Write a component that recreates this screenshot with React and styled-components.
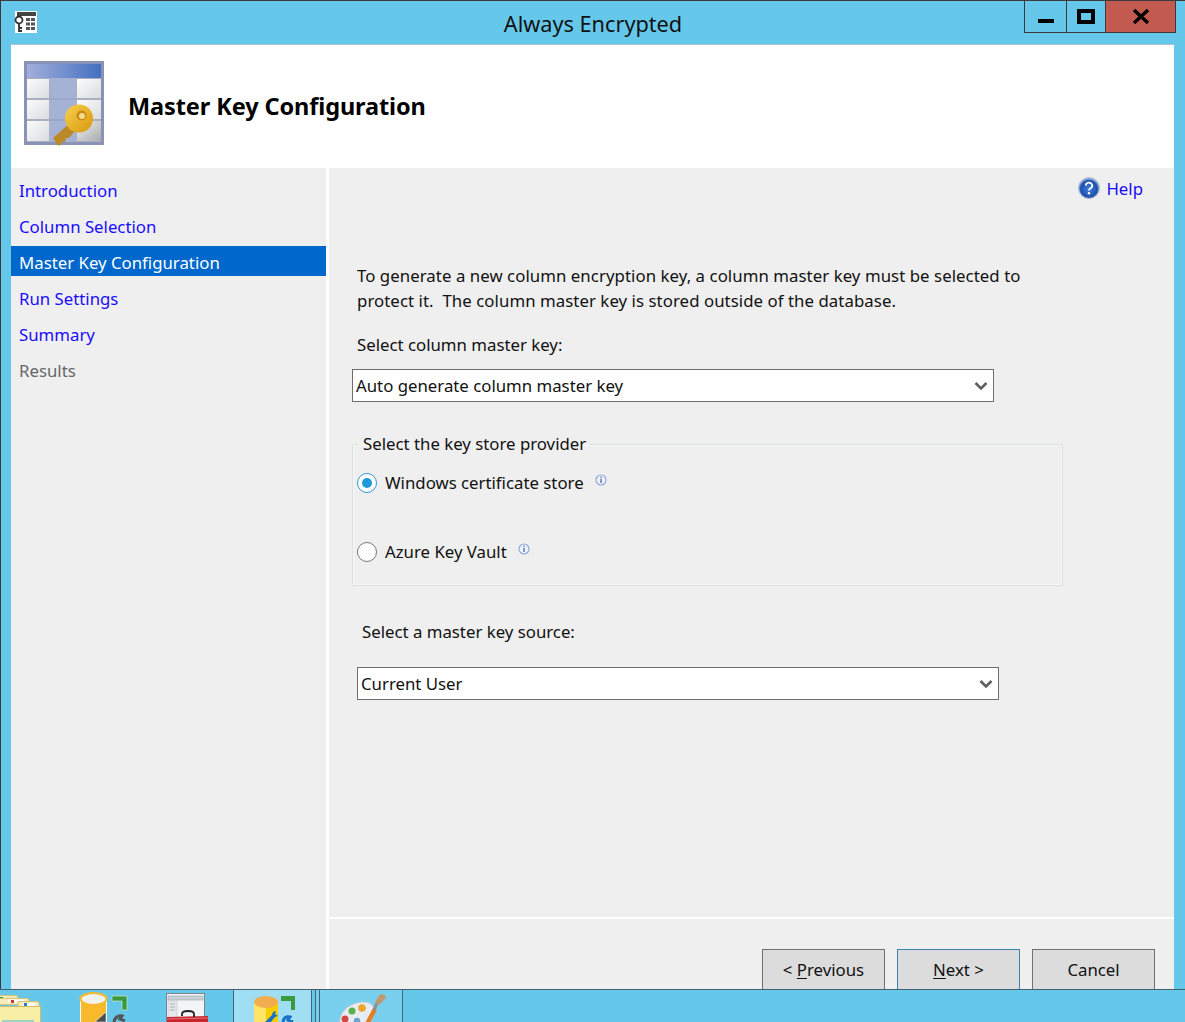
import React from 'react';
import styled, { createGlobalStyle } from 'styled-components';

const Global = createGlobalStyle`
  html, body { margin: 0; padding: 0; background: #65c8ea; }
  body { font-family: "Noto Sans", "Open Sans", "Liberation Sans", sans-serif; font-size: 16.8px; color: #111; }
  * { box-sizing: border-box; }
`;

const Screen = styled.div`
  width: 1185px; height: 1022px; display: flex; flex-direction: column; overflow: hidden; background: #65c8ea;
`;
const Win = styled.div`
  height: 989px; flex: none; display: flex; flex-direction: column; overflow: hidden;
  border-top: 1px solid #3a3a3a; border-left: 1px solid #3a3a3a; padding: 0 11px 0 10px;
`;
const TitleBar = styled.div`
  height: 43px; flex: none; display: flex; align-items: flex-start; position: relative; margin: 0 -11px 0 -10px; padding-left: 13px;
`;
const AppIcon = styled.svg`
  width: 24px; height: 24px; margin-top: 9px; flex: none;
`;
const Title = styled.div`
  position: absolute; left: 0; right: 0; top: 8px; text-align: center; font-size: 21.7px; line-height: 30px; color: #111;
`;
const Controls = styled.div`
  position: absolute; left: 1023px; top: 0; width: 152px; height: 32px; display: flex;
  border: 1px solid #3a3a3a; border-top: none;
`;
const Ctl = styled.div`
  width: ${p => p.$w}px; height: 31px; display: flex; align-items: flex-start; justify-content: center;
  background: ${p => p.$close ? '#c35a50' : 'transparent'};
  border-right: ${p => p.$close ? 'none' : '1px solid #3a3a3a'};
`;
const Header = styled.div`
  height: 124px; flex: none; background: #fff; display: flex; align-items: center; padding: 0 0 0 13px; gap: 22px;
  border-top: 1px solid #a8c4d0;
`;
const Heading = styled.h1`
  margin: 0 0 2px 0; font-size: 23.5px; font-weight: 700; color: #000; letter-spacing: -0.1px;
`;
const Body = styled.div`
  flex: 1; display: flex; min-height: 0; background: #fff;
`;
const Side = styled.nav`
  width: 315px; flex: none; background: #efefef; padding-top: 6px; display: flex; flex-direction: column;
`;
const Step = styled.div`
  height: 36px; line-height: 33px; padding-left: 8px; font-size: 16.8px;
  color: ${p => p.$active ? '#fff' : p.$disabled ? '#666' : '#1a0dff'};
  background: ${p => p.$active ? '#0067cc' : 'transparent'};
  ${p => p.$active ? 'height: 30px; margin-bottom: 6px;' : ''}
`;
const Main = styled.main`
  margin-left: 3px; flex: 1; min-width: 0; display: flex; flex-direction: column; background: #efefef;
`;
const Content = styled.div`
  height: 751px; flex: none; padding: 0 0 0 23px; border-bottom: 2px solid #fff;
`;
const HelpRow = styled.div`
  display: flex; justify-content: flex-end; align-items: center; gap: 6px; height: 22px; margin-top: 9px; padding-right: 31px;
  font-size: 16.8px; color: #1a0dff;
`;
const Intro = styled.p`
  margin: 64px 0 0 5px; font-size: 16.8px; letter-spacing: 0.06px; line-height: 25px; width: 700px; color: #111; white-space: pre-wrap;
`;
const FieldLabel = styled.div`
  margin: ${p => p.$top}px 0 0 ${p => p.$left}px; font-size: 16.8px; line-height: 24px; color: #111;
`;
const Select = styled.div`
  width: 642px; height: 33px; margin: ${p => p.$top}px 0 0 ${p => p.$left}px; background: #fff; border: 1px solid #6e6e6e;
  display: flex; align-items: center; justify-content: space-between; padding: 0 5px 0 3px;
  font-size: 16.8px; color: #111;
`;
const Group = styled.fieldset`
  width: 711px; height: 154px; margin: 30px 0 0 0; padding: 0 0 0 4px; border: 1px solid #dbe0e3; border-radius: 2px;
  box-shadow: inset 0 0 0 1px #f7f7f7; min-width: 0; display: flex; flex-direction: column;
`;
const Legend = styled.legend`
  margin-left: 2px; padding: 0 4px; font-size: 16.8px; line-height: 24px; color: #111;
`;
const RadioRow = styled.div`
  display: flex; align-items: center; height: 24px; margin-top: ${p => p.$top}px; font-size: 16.8px; color: #111;
`;
const RadioText = styled.span`
  line-height: 22px;
`;
const Radio = styled.span`
  width: 20px; height: 20px; border-radius: 50%; flex: none; margin-right: 8px; background: #fff;
  border: 1.5px solid ${p => p.$on ? '#2a9ad6' : '#777'}; display: flex; align-items: center; justify-content: center;
  &::after { content: ''; width: 10px; height: 10px; border-radius: 50%; background: ${p => p.$on ? '#1f9ad8' : 'transparent'}; }
`;
const Info = styled.svg`
  width: 12px; height: 12px; margin: -7px 0 0 11px; flex: none;
`;
const Footer = styled.div`
  flex: 1; min-height: 0; overflow: hidden; display: flex; justify-content: flex-end; gap: 12px; padding: 30px 19px 0 0;
`;
const Btn = styled.div`
  width: 123px; height: 60px; background: #dcdcdc; border: 1px solid ${p => p.$focus ? '#3c7fb1' : '#707070'};
  text-align: center; font-size: 16.8px; line-height: 40px; color: #111;
  & u { text-underline-offset: 2px; }
`;
const Taskbar = styled.div`
  height: 33px; flex: none; border-top: 1px solid #44606c; background: #65c8ea; display: flex; align-items: stretch; overflow: hidden;
`;
const TaskSlot = styled.div`
  width: ${p => p.$w}px; margin-left: ${p => p.$ml || 0}px; flex: none; overflow: hidden; height: 32px;
  ${p => p.$open ? 'background: #a0dff3; border-left: 1px solid #3f6576; border-right: 1px solid #3f6576;' : ''}
  ${p => p.$run ? 'background: #78d0ee; border-left: 1px solid #3f6576; border-right: 1px solid #3f6576;' : ''}
`;
const TaskIcon = styled.svg`
  display: block; width: ${p => p.$w}px; height: 32px;
`;

const Chevron = () => (
  <svg width="14" height="10" viewBox="0 0 14 10" style={{ flex: 'none' }}>
    <path d="M1.5 2 L7 7.5 L12.5 2" fill="none" stroke="#5f5f5f" strokeWidth="2.6" />
  </svg>
);

const InfoIcon = () => (
  <Info viewBox="0 0 12 12">
    <circle cx="6" cy="6" r="5" fill="#eef3fb" stroke="#8fa9d6" strokeWidth="1.2" />
    <rect x="5.4" y="2.6" width="1.3" height="1.3" fill="#4068b5" />
    <rect x="5.4" y="4.8" width="1.3" height="4.2" fill="#4068b5" />
  </Info>
);

const HeaderIcon = () => (
  <svg width="82" height="88" viewBox="0 0 82 88" style={{ flex: 'none', marginTop: '-5px' }}>
    <defs>
      <filter id="soft" x="-5%" y="-5%" width="110%" height="110%"><feGaussianBlur stdDeviation="0.7" /></filter>
      <linearGradient id="hb" x1="0" x2="1" y1="0" y2="0"><stop offset="0" stopColor="#a3aedc" /><stop offset="1" stopColor="#4470c0" /></linearGradient>
      <linearGradient id="cell" x1="0" x2="1" y1="0" y2="1"><stop offset="0" stopColor="#fbfbfb" /><stop offset="1" stopColor="#dadcdf" /></linearGradient>
      <linearGradient id="cellr" x1="0" x2="1" y1="0" y2="1"><stop offset="0" stopColor="#f0f0f0" /><stop offset="1" stopColor="#a9abad" /></linearGradient>
      <linearGradient id="keyg" x1="0" x2="1" y1="0" y2="1"><stop offset="0" stopColor="#f9d04c" /><stop offset="1" stopColor="#d8980f" /></linearGradient>
    </defs>
    <g filter="url(#soft)">
      <rect x="0" y="1" width="80" height="84" fill="#8a93b5" />
      <rect x="3" y="4" width="74" height="14" fill="url(#hb)" />
      <rect x="3" y="18" width="74" height="64" fill="#a9afc0" />
      <rect x="26" y="18" width="26" height="64" fill="#a6b1d6" />
      <path d="M26 39h26M26 60h26" stroke="#99a3c4" strokeWidth="1.5" />
      <rect x="3" y="19" width="22" height="19" fill="url(#cell)" />
      <rect x="3" y="40" width="22" height="19" fill="url(#cell)" />
      <rect x="3" y="61" width="22" height="20" fill="url(#cell)" />
      <rect x="53" y="19" width="24" height="19" fill="url(#cell)" />
      <rect x="53" y="40" width="24" height="19" fill="url(#cell)" />
      <rect x="53" y="61" width="24" height="20" fill="url(#cellr)" />
      <path d="M46 63 L29 78 L32 83 L35 86 L38 82 L41 82 L42 78 L45 78 L53 69 Z" fill="#bb8a25" />
      <circle cx="55" cy="58.500" r="14" fill="url(#keyg)" />
      <circle cx="57.500" cy="55.500" r="5" fill="#c98a12" />
      <circle cx="58" cy="56" r="3" fill="#f0dc90" />
    </g>
  </svg>
);

export default function App() {
  return (
    <Screen>
      <Global />
      <Win>
        <TitleBar>
          <AppIcon viewBox="0 0 24 24">
            <rect x="1" y="1" width="22" height="22" fill="#fff" />
            <rect x="3" y="2" width="19" height="4" fill="#444" />
            <path d="M12 8h4v3h-4zM17 8h4v3h-4zM12 12.5h4v3h-4zM17 12.5h4v3h-4zM12 17h4v3h-4zM17 17h4v3h-4z" fill="#555" />
            <circle cx="5" cy="10" r="3.5" fill="#fff" stroke="#333" strokeWidth="1.8" />
            <path d="M5 13.5V22M5 18h3M5 21h3" stroke="#333" strokeWidth="1.8" fill="none" />
          </AppIcon>
          <Title>Always Encrypted</Title>
          <Controls>
            <Ctl $w={42}>
              <svg width="16" height="24" viewBox="0 0 16 24"><rect x="0" y="18" width="16" height="4" fill="#000" /></svg>
            </Ctl>
            <Ctl $w={39}>
              <svg width="18" height="24" viewBox="0 0 18 24"><rect x="2" y="10" width="14" height="11" fill="none" stroke="#000" strokeWidth="4" /></svg>
            </Ctl>
            <Ctl $close $w={69}>
              <svg width="18" height="24" viewBox="0 0 18 24"><path d="M2 9 L16 22 M16 9 L2 22" stroke="#000" strokeWidth="3.4" fill="none" /></svg>
            </Ctl>
          </Controls>
        </TitleBar>
        <Header>
          <HeaderIcon />
          <Heading>Master Key Configuration</Heading>
        </Header>
        <Body>
          <Side>
            <Step>Introduction</Step>
            <Step>Column Selection</Step>
            <Step $active>Master Key Configuration</Step>
            <Step>Run Settings</Step>
            <Step>Summary</Step>
            <Step $disabled>Results</Step>
          </Side>
          <Main>
            <Content>
              <HelpRow>
                <svg width="22" height="22" viewBox="0 0 22 22">
                  <defs><radialGradient id="hg" cx="0.5" cy="0.55" r="0.55"><stop offset="0" stopColor="#3f7fe0" /><stop offset="0.72" stopColor="#1f4fa8" /><stop offset="1" stopColor="#d3dff2" /></radialGradient></defs>
                  <circle cx="11" cy="11" r="10.5" fill="url(#hg)" stroke="#a8bad8" />
                  <path d="M7.8 8.5a3.2 3 0 1 1 4.6 2.8c-1 .6-1.4 1.1-1.4 2.2" fill="none" stroke="#fff" strokeWidth="1.8" />
                  <circle cx="11" cy="16.2" r="1.2" fill="#fff" />
                </svg>
                Help
              </HelpRow>
              <Intro>{'To generate a new column encryption key, a column master key must be selected to\nprotect it.  The column master key is stored outside of the database.'}</Intro>
              <FieldLabel $top={20} $left={5}>Select column master key:</FieldLabel>
              <Select $top={12} $left={0}>Auto generate column master key<Chevron /></Select>
              <Group>
                <Legend>Select the key store provider</Legend>
                <RadioRow $top={15}><Radio $on /><RadioText>Windows certificate store</RadioText><InfoIcon /></RadioRow>
                <RadioRow $top={45}><Radio /><RadioText>Azure Key Vault</RadioText><InfoIcon /></RadioRow>
              </Group>
              <FieldLabel $top={34} $left={10}>Select a master key source:</FieldLabel>
              <Select $top={23} $left={5}>Current User<Chevron /></Select>
            </Content>
            <Footer>
              <Btn>&lt; <u>P</u>revious</Btn>
              <Btn $focus><u>N</u>ext &gt;</Btn>
              <Btn>Cancel</Btn>
            </Footer>
          </Main>
        </Body>
      </Win>
      <Taskbar>
        <TaskSlot $w={79}>
          <TaskIcon $w={79} viewBox="0 0 79 32">
            <path d="M-2 5.5h18a2 2 0 0 1 2 2v3h-20z" fill="#f7ecb8" stroke="#d8c27a" />
            <rect x="0" y="7" width="3" height="3" fill="#2f9e44" />
            <path d="M-2 8.5h29a2 2 0 0 1 2 2v4h-31z" fill="#f7ecb8" stroke="#d8c27a" />
            <path d="M8 9.5h16v3h-16z" fill="#fff" />
            <rect x="11" y="10" width="3" height="3" fill="#c23a2b" />
            <path d="M18 11.5h19a2 2 0 0 1 2 2v3h-21z" fill="#f7ecb8" stroke="#d8c27a" />
            <path d="M23 13h12v3h-12z" fill="#fff" />
            <rect x="24" y="13" width="3" height="3" fill="#2c7ac8" />
            <path d="M-2 16.5h42.500v16h-42.500z" fill="#f8eea6" stroke="#d4bb6b" />
            <path d="M2 30h32v2h-32z" fill="#9ed4c8" />
          </TaskIcon>
        </TaskSlot>
        <TaskSlot $w={154}>
          <TaskIcon $w={154} viewBox="0 0 154 32">
            <path d="M1.500 9v24h26V9z" fill="#f8b92b" stroke="#f2f6f4" />
            <ellipse cx="14.500" cy="9" rx="13" ry="6" fill="#f1f1ee" stroke="#f8b92b" strokeWidth="2" />
            <path d="M16 32L27 22v10z" fill="#4c4c4c" stroke="#e6eef0" strokeWidth=".6" />
            <path d="M33 6h15v14h-5v-9h-10z" fill="#3a9a3e" stroke="#cfe8d0" strokeWidth=".7" />
            <path d="M35 33c0-5 4-8 8-7l-2 3 5 2" fill="none" stroke="#555" strokeWidth="3" />
            <rect x="87.500" y="3.500" width="38" height="30" fill="#f2f4f6" stroke="#7e8288" />
            <rect x="89" y="6" width="35" height="4" fill="#c9d0d8" stroke="#8e949b" strokeWidth=".5" />
            <path d="M89 11h9v20h-9z" fill="#e4e8ec" stroke="#b6bcc4" strokeWidth=".5" />
            <path d="M91 14h5M91 17h5M91 20h5" stroke="#9aa2aa" strokeWidth=".8" />
            <path d="M88 27l41-1v7H88z" fill="#c9252d" />
            <path d="M88 29l41-1" stroke="#e77378" strokeWidth="1.200" />
            <path d="M103 26v-2c0-4 12-4 12 0v3" fill="none" stroke="#222" strokeWidth="1.800" />
          </TaskIcon>
        </TaskSlot>
        <TaskSlot $open $w={79}>
          <TaskIcon $w={77} viewBox="0 0 77 32">
            <path d="M20 12h24v22H20z" fill="#ffe566" />
            <path d="M32 12h12v22H32z" fill="#fbcd00" />
            <ellipse cx="32" cy="12" rx="12" ry="6" fill="#f2ae4e" />
            <path d="M47 6h14v14h-4v-9h-10z" fill="#3a9a3e" />
            <path d="M30 33l8-8 1-3 3-1-1 3 3 2-3 1-5 6z" fill="#1871c9" />
            <path d="M49 33c0-5 3-7 7-6l-2 3 5 2" fill="none" stroke="#1871c9" strokeWidth="3" />
          </TaskIcon>
        </TaskSlot>
        <TaskSlot $run $w={5} $ml={3} />
        <TaskSlot $run $w={84} $ml={-1}>
          <TaskIcon $w={82} viewBox="0 0 82 32">
            <path d="M20 34C18 22 30 12 44 12c6 0 10 3 10 9 0 5-2 12-6 13z" fill="#e6ecf2" stroke="#bccad6" />
            <circle cx="25" cy="29" r="3.500" fill="#d6453f" />
            <circle cx="32" cy="21" r="3.500" fill="#5cb04a" />
            <circle cx="42" cy="18" r="3.800" fill="#eca52b" />
            <circle cx="37" cy="31" r="3.200" fill="#6da3c9" />
            <path d="M47 34L55 19" stroke="#e07f26" strokeWidth="4.500" />
            <path d="M54 20l3-7" stroke="#8a8e92" strokeWidth="3" />
            <path d="M55 12l5-8 5 1 1 3-7 7z" fill="#c09a6c" />
          </TaskIcon>
        </TaskSlot>
      </Taskbar>
    </Screen>
  );
}
